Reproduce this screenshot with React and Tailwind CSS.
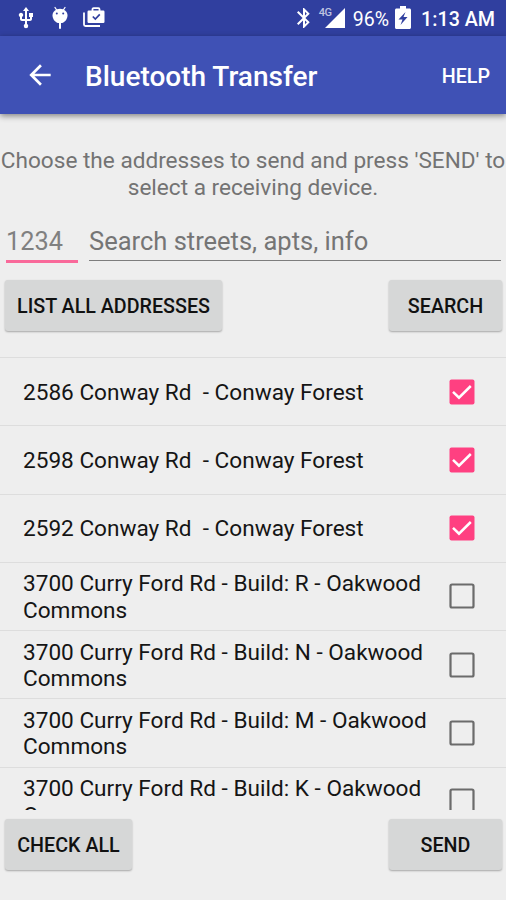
import React, { useState } from 'react';
import { MdArrowBack, MdBluetooth, MdUsb } from 'react-icons/md';

const ADDRESSES = [
  { id: 1, text: '2586 Conway Rd  - Conway Forest', checked: true },
  { id: 2, text: '2598 Conway Rd  - Conway Forest', checked: true },
  { id: 3, text: '2592 Conway Rd  - Conway Forest', checked: true },
  { id: 4, text: '3700 Curry Ford Rd - Build: R - Oakwood Commons', checked: false },
  { id: 5, text: '3700 Curry Ford Rd - Build: N - Oakwood Commons', checked: false },
  { id: 6, text: '3700 Curry Ford Rd - Build: M - Oakwood Commons', checked: false },
  { id: 7, text: '3700 Curry Ford Rd - Build: K - Oakwood Commons', checked: false },
];

const DebugIcon = () => (
  <svg width="18" height="24" viewBox="0 0 18 24" fill="none">
    <path d="M4 1.5l2 3M14 1.5l-2 3" stroke="#fff" strokeWidth="1.3" strokeLinecap="round" />
    <path d="M1.5 9.5c0-3.700 3.200-6.700 7.500-6.700s7.500 3 7.500 6.700c0 3.500-2.800 7-5.500 7.500H7c-2.700-.5-5.500-4-5.500-7.500z" fill="#fff" />
    <path d="M9 16v6" stroke="#fff" strokeWidth="2" strokeLinecap="round" />
    <circle cx="5.800" cy="7.500" r="1" fill="#303f9f" />
    <circle cx="12.200" cy="7.500" r="1" fill="#303f9f" />
  </svg>
);

const WorkIcon = () => (
  <svg width="22" height="20" viewBox="0 0 22 20" fill="none">
    <path d="M1 5.500v12c0 .8.700 1.500 1.500 1.500H17" stroke="#fff" strokeWidth="1.800" />
    <path d="M9.500 4V2.200c0-.6.500-1.100 1.100-1.100h4.800c.6 0 1.100.5 1.100 1.100V4" stroke="#fff" strokeWidth="1.800" />
    <rect x="4.500" y="3.500" width="17" height="12.500" rx="1.200" fill="#fff" />
    <path d="M9.800 9.500l2.500 2.500 4.500-4.700" stroke="#303f9f" strokeWidth="1.700" />
  </svg>
);

const SignalIcon = () => (
  <svg width="20" height="20" viewBox="0 0 21 21">
    <path d="M21 0v21H0z" fill="#fff" />
  </svg>
);

const BatteryIcon = () => (
  <svg width="16" height="23" viewBox="0 0 16 23">
    <path d="M5 0h6v2.500h3.500c.8 0 1.500.7 1.500 1.500v17.500c0 .8-.7 1.500-1.500 1.500h-13C.7 23 0 22.300 0 21.500V4c0-.8.700-1.500 1.500-1.500H5z" fill="#fff" />
    <path d="M10.500 6L3.500 13.500h4L5.500 19l7-8h-4z" fill="#303f9f" />
  </svg>
);

const StatusBar = () => (
  <div className="h-9 shrink-0 bg-[#303f9f] flex items-center justify-between pl-[14px] pr-[11px] text-white">
    <div className="flex items-center">
      <MdUsb size={24} />
      <div className="ml-[13px]"><DebugIcon /></div>
      <div className="ml-[14px] mb-[2px]"><WorkIcon /></div>
    </div>
    <div className="flex items-center">
      <MdBluetooth size={24} />
      <div className="relative ml-[9px]">
        <SignalIcon />
        <span className="absolute -left-[6px] -top-px text-[11px] leading-none font-medium tracking-[-0.5px] text-white/70">4G</span>
      </div>
      <span className="ml-[8px] mt-[3px] text-[19.5px]">96%</span>
      <div className="ml-[6px] mb-px"><BatteryIcon /></div>
      <span className="ml-[10px] mt-[3px] text-[19.7px] font-medium whitespace-nowrap">1:13 AM</span>
    </div>
  </div>
);

const Button = ({ children, className, onClick }) => (
  <button
    onClick={onClick}
    className={`h-[51px] rounded-[3px] bg-[#d6d7d7] pt-[3px] text-[19.7px] font-medium text-[#111] shadow-[0_1px_2px_rgba(0,0,0,0.3)] whitespace-nowrap ${className}`}
  >
    {children}
  </button>
);

const Checkbox = ({ checked }) => (
  <svg width="26" height="26" viewBox="0 0 26 26" fill="none" className="shrink-0">
    {checked ? (
      <>
        <rect x="0.500" y="0.500" width="25" height="25" rx="2" fill="#ff4081" />
        <path d="M4 12.800l6 5.900L21.800 7" stroke="#fff" strokeWidth="2.500" />
      </>
    ) : (
      <rect x="1.500" y="1.500" width="23" height="23" rx="1.500" stroke="#6b6b6b" strokeWidth="2.200" />
    )}
  </svg>
);

const App = () => {
  const [addresses, setAddresses] = useState(ADDRESSES);

  const toggle = (id) => {
    setAddresses(addresses.map((a) => (a.id === id ? { ...a, checked: !a.checked } : a)));
  };

  const checkAll = () => setAddresses(addresses.map((a) => ({ ...a, checked: true })));

  return (
    <div className="w-[506px] h-[900px] overflow-hidden bg-[#eeeeee] flex flex-col font-[Roboto,sans-serif]">
      <StatusBar />
      <header className="h-[78px] shrink-0 bg-[#3f51b5] flex items-center pl-6 pr-4 text-white shadow-[0_2px_6px_rgba(0,0,0,0.45)]">
        <MdArrowBack size={32} />
        <h1 className="ml-[29px] mt-[4px] text-[28px] font-medium whitespace-nowrap">Bluetooth Transfer</h1>
        <button className="ml-auto mt-[4px] text-[19.7px] font-medium">HELP</button>
      </header>

      <p className="mt-[33px] text-center text-[22.6px] leading-[27px] text-[#737373]">
        <span className="flex justify-center whitespace-nowrap">Choose the addresses to send and press 'SEND' to</span>
        <span className="block">select a receiving device.</span>
      </p>

      <div className="mt-[22px] pl-[6px] pr-[5px] flex items-start gap-[11px]">
        <input
          placeholder="1234"
          className="w-[72px] h-[40px] border-b-3 border-[#f9699a] text-[25.3px] placeholder:text-[#808080] outline-none"
        />
        <input
          placeholder="Search streets, apts, info"
          className="w-[412px] h-[38px] border-b-[1.5px] border-[#7d7d7d] text-[25.5px] placeholder:text-[#757575] outline-none"
        />
      </div>

      <div className="mt-[17px] pl-[5px] pr-[4px] flex justify-between">
        <Button className="w-[217px]">LIST ALL ADDRESSES</Button>
        <Button className="w-[113px]">SEARCH</Button>
      </div>

      <ul className="mt-[26px] h-[453px] shrink-0 overflow-hidden">
        {addresses.map((a) => (
          <li
            key={a.id}
            onClick={() => toggle(a.id)}
            className="h-[68.25px] border-t-[1.5px] border-[#dddddd] pl-[23px] pr-[31px] flex items-center justify-between"
          >
            <span className="w-[412px] mt-[3px] text-[22.6px] leading-[26.5px] text-[#151515] whitespace-pre-wrap">{a.text}</span>
            <Checkbox checked={a.checked} />
          </li>
        ))}
      </ul>

      <div className="mt-[9px] pl-[5px] pr-[4px] flex justify-between">
        <Button className="w-[127px]" onClick={checkAll}>CHECK ALL</Button>
        <Button className="w-[113px]">SEND</Button>
      </div>
    </div>
  );
};

export default App;
